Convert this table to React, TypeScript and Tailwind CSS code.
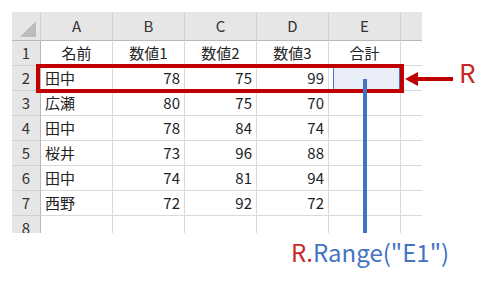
const COLUMNS = ['A', 'B', 'C', 'D', 'E'];

const ROWS: string[][] = [
  ['名前', '数値1', '数値2', '数値3', '合計'],
  ['田中', '78', '75', '99', ''],
  ['広瀬', '80', '75', '70', ''],
  ['田中', '78', '84', '74', ''],
  ['桜井', '73', '96', '88', ''],
  ['田中', '74', '81', '94', ''],
  ['西野', '72', '92', '72', ''],
  ['', '', '', '', ''],
];

const font = 'font-["Meiryo","Noto_Sans_CJK_JP",sans-serif]';

function HeaderCell({ children }: { children?: React.ReactNode }) {
  return (
    <div className="flex items-center justify-center border-r border-b border-r-[#d0d0d0] border-b-[#b8b8b8] bg-[#e6e6e6] text-[15px] text-[#333]">
      {children}
    </div>
  );
}

function RowHeader({ n }: { n: number }) {
  return (
    <div className="flex items-center justify-center border-r border-b border-r-[#b8b8b8] border-b-[#d0d0d0] bg-[#e6e6e6] text-[15px] text-[#333]">
      {n}
    </div>
  );
}

function Cell({
  value,
  row,
  col,
}: {
  value: string;
  row: number;
  col: number;
}) {
  const isNumber = /^\d+$/.test(value);
  const isSelected = row === 1 && col === 4;
  const align = row === 0 ? 'justify-center' : isNumber ? 'justify-end pr-1' : 'justify-start pl-1';

  return (
    <div
      className={`flex items-center border-r border-b border-[#d9d9d9] text-[15px] text-[#222] ${align}`}
    >
      {isSelected ? (
        <div className="h-full w-full border-[1.5px] border-[#4472c4] bg-[#e9edf7]" />
      ) : (
        value
      )}
    </div>
  );
}

export default function App() {
  return (
    <div className={`relative h-[281px] w-[485px] overflow-hidden bg-white ${font}`}>
      <div className="ml-3 mt-3 h-[221px] w-[410px] overflow-hidden">
        <div className="grid grid-cols-[29px_72px_72px_72px_72px_72px_72px] grid-rows-[29px_repeat(8,25px)]">
          <div className="relative border-r border-b border-r-[#d0d0d0] border-b-[#b8b8b8] bg-[#e6e6e6]">
            <svg className="absolute right-[4px] bottom-[3px]" width="16" height="16" viewBox="0 0 16 16">
              <polygon points="16,0 16,16 0,16" fill="#bcbcbc" />
            </svg>
          </div>
          {COLUMNS.map((c) => (
            <HeaderCell key={c}>{c}</HeaderCell>
          ))}
          <HeaderCell />

          {ROWS.map((row, r) => (
            <div key={r} className="contents">
              <RowHeader n={r + 1} />
              {row.map((value, c) => (
                <Cell key={c} value={value} row={r} col={c} />
              ))}
              <div className="border-r border-b border-[#d9d9d9]" />
            </div>
          ))}
        </div>
      </div>

      {/* highlight of row 2 */}
      <div className="absolute top-[64px] left-[36px] h-[29px] w-[368px] border-4 border-[#c00000]" />

      {/* arrow pointing at the range */}
      <svg className="absolute top-[70px] left-[404px]" width="52" height="18" viewBox="0 0 52 18">
        <rect x="11" y="7" width="38" height="4" fill="#c00000" />
        <polygon points="1,9 14,2 14,16" fill="#c00000" />
      </svg>
      <div className="absolute top-[59px] left-[459px] font-['Noto_Sans_CJK_JP',sans-serif] text-[26px] leading-none text-[#c62828]">
        R
      </div>

      {/* connector down to the label */}
      <div className="absolute top-[79px] left-[363px] h-[154px] w-1 bg-[#4472c4]" />

      <div className="mt-[4px] pl-[291px] font-['Noto_Sans_CJK_JP',sans-serif] text-[24px] leading-[30px]">
        <span className="text-[#c62828]">R.</span>
        <span className="text-[#4472c4]">Range("E1")</span>
      </div>
    </div>
  );
}
